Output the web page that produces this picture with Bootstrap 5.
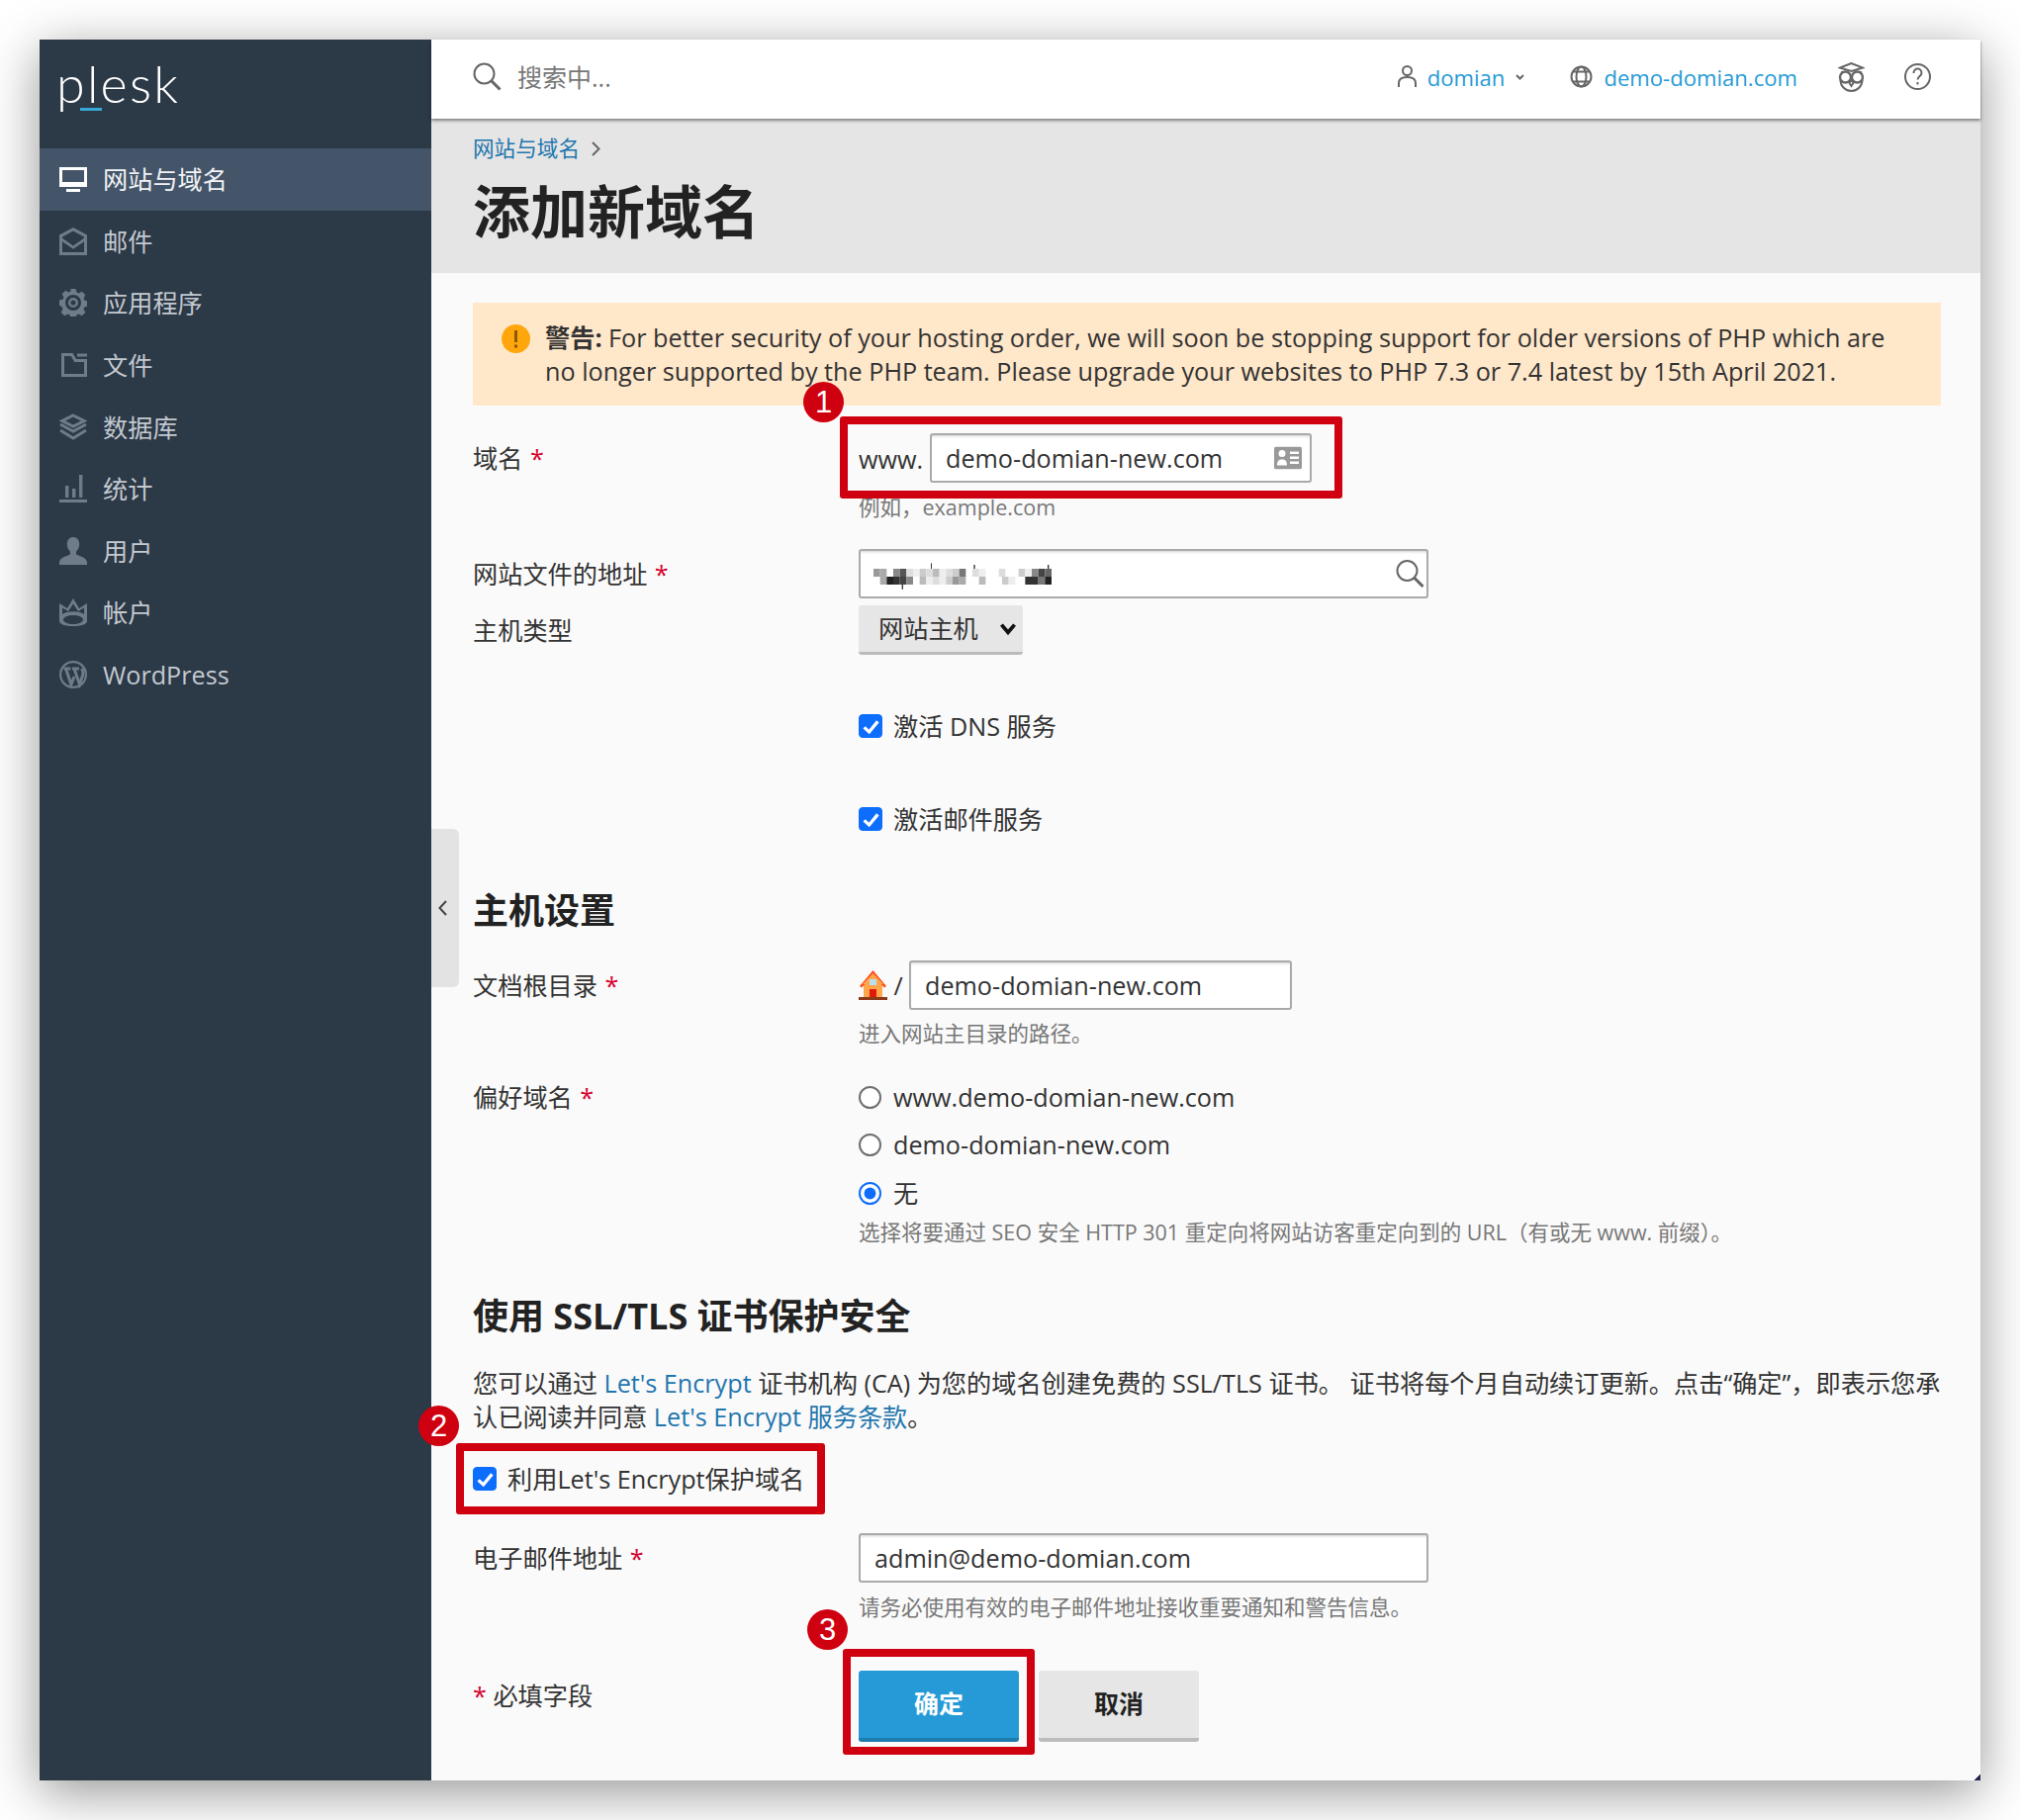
<!DOCTYPE html>
<html lang="zh-CN">
<head>
<meta charset="utf-8">
<title>添加新域名</title>
<link rel="stylesheet" href="https://cdn.jsdelivr.net/npm/bootstrap@5.3.0/dist/css/bootstrap.min.css">
<style>
body{background:#fff;margin:0;font-family:"Open Sans","Noto Sans CJK SC",sans-serif;font-size:25.2px;color:#333;line-height:34px}
.app-window{position:relative;width:1962px;height:1760px;margin:40px;box-shadow:0 12px 50px rgba(0,0,0,.42);background:#fafafa}
.corner-mark{position:absolute;right:0;bottom:0;width:7px;height:7px;background:linear-gradient(135deg,transparent 50%,#23264f 50%)}
.side{width:396px;background:#2c3947;flex:none}
.logo-wrap{height:110px;padding:10px 0 0 17px}
.logo-txt{position:relative;display:inline-block;font-family:Lato,sans-serif;font-weight:300;font-size:52px;line-height:68px;letter-spacing:2.2px;color:#fff}
.logo-txt::after{content:"";position:absolute;left:24px;top:59px;width:22px;height:3px;background:#36a9d6}
.side .nav-link{height:62.6px;display:flex;align-items:center;padding:0 0 0 20px;color:#c3c9d0;font-size:25.2px;gap:16px}
.side .nav-link svg{width:28px;height:28px;flex:none;fill:#6f7b88;stroke:none}
.side .nav-link svg .st{fill:none;stroke:#6f7b88;stroke-width:3}
.side .nav-link.active{background:#445569;color:#f0f2f5}
.side .nav-link.active svg{fill:#fff}
.main-col{position:relative;min-width:0}
.top-strip{height:80px;background:#fff;padding:0 50px 5px 42px;box-shadow:0 2px 3px rgba(0,0,0,.45);position:relative;z-index:2}
.search-hint{color:#777;margin-left:16px;font-size:25px}
.top-link{color:#259ad6;text-decoration:none;font-size:22.1px;font-weight:500}
.ln{fill:none;stroke:#666;stroke-width:2}
.mr-usr{margin-right:11px}.mr-chev{margin-left:11px;margin-right:46px}.mr-globe{margin-right:11px}.ml-owl{margin-left:41px}.ml-help{margin-left:40px}
.page-head{height:156px;background:#e5e5e5;padding:12px 42px 0}
.crumb{font-size:21.6px;line-height:36px;display:flex;align-items:center;gap:12px}
.crumb a,.txt-link{color:#1f76ad;text-decoration:none}
.page-title{font-size:58px;font-weight:700;line-height:76px;margin:8px 0 0;color:#222}
.form-wrap{padding:30px 40px 0 42px}
.warn-box{background:#ffe7c9;border:0;border-radius:0;margin:0;padding:18px 40px 18px 29px;color:#333;gap:15px;line-height:34px}
.warn-ico{flex:none;width:29px;height:29px;margin-top:4px}
.field-lbl{width:390px;flex:none;margin:0}
.lbl-50{line-height:50px}.lbl-30{line-height:30px}
.req{color:#d6002f;margin-left:1px}
.tx-input.form-control{height:50px;border:2px solid #aaa;border-radius:3px;padding:0 14px;font-size:25.2px;color:#333;background:#fff;box-shadow:inset 0 3px 3px -2px rgba(0,0,0,.18)}
.w-576{width:576px}.w-386{width:386px}.w-387{width:387px}
.pos-wrap{position:relative}
.in-ico{position:absolute;top:50%;transform:translateY(-50%);right:10px}
.ico-search{right:4px}
.hint-txt{font-size:21.5px;line-height:30px;color:#777}
.www-txt{width:72px;flex:none;height:50px;line-height:52px}
.mask-svg{position:absolute;left:15px;top:12px}
.host-select.form-select{width:166px;height:50px;padding:0 40px 0 20px;border:0;border-bottom:3px solid #bbb;border-radius:3px;background-color:#e6e6e6;font-size:25.2px;color:#333;background-position:right 4px center;background-size:22px 16px;background-image:url("data:image/svg+xml,%3csvg xmlns='http://www.w3.org/2000/svg' viewBox='0 0 20 14'%3e%3cpath fill='none' stroke='%23111' stroke-width='3.4' d='M4 3l6 7 6-7'/%3e%3c/svg%3e")}
.chk-row{display:flex;align-items:center;gap:12px;margin:0;padding:0;min-height:30px;line-height:30px}
.chk-row .form-check-input{width:23px;height:23px;margin:0;flex:none;float:none}
.chk-row .form-check-input[type=checkbox]{width:24px;height:24px;margin-right:-1px;border-radius:4px;background-size:100% 100%;background-image:url("data:image/svg+xml,%3csvg xmlns='http://www.w3.org/2000/svg' viewBox='0 0 24 24'%3e%3cpath fill='none' stroke='%23fff' stroke-width='3.6' d='M5 13.500l5.500 5L20 7'/%3e%3c/svg%3e")}
.radio-in.form-check-input{border:2px solid #6f6f6f;background-color:#fff}
.radio-in.form-check-input:checked{border:2px solid #0d6efd;background-color:#fff;background-size:100% 100%;background-image:url("data:image/svg+xml,%3csvg xmlns='http://www.w3.org/2000/svg' viewBox='-4 -4 8 8'%3e%3ccircle r='2.500' fill='%230d6efd'/%3e%3c/svg%3e")}
.sec-title{font-weight:700;color:#222;margin:0;line-height:50px;font-size:36px}
.m7{margin-top:7px}.m9{margin-top:9px}.m10{margin-top:10px}.m18{margin-top:18px}.m19{margin-top:19px}.m25{margin-top:25px}.m27{margin-top:27px}.m28{margin-top:28px}.m31{margin-top:31px}.m34{margin-top:34px}.m40{margin-top:40px}.m45{margin-top:45px}.m49{margin-top:49px}.m53{margin-top:53px}.m57{margin-top:57px}.m64{margin-top:64px}
.slash{width:22px;text-align:center;flex:none}
.para-txt{margin:25px 0 0;line-height:34px}
.act-btn.btn{width:162px;height:72px;border:0;border-bottom:4px solid;border-radius:3px;font-size:25px;font-weight:700;padding:0}
.act-ok.btn{background:#259ad6;color:#fff;border-color:#1f7cae}
.act-no.btn{background:#e6e6e6;color:#222;border-color:#bcbcbc}
.act-gap{gap:20px}
.red-frame{position:absolute;border:8px solid #cf000f;border-radius:3px;pointer-events:none;z-index:5}
.rf1{left:809px;top:381px;width:508px;height:83px}
.rf2{left:421px;top:1419px;width:373px;height:72px}
.rf3{left:812px;top:1627px;width:194px;height:107px}
.num-dot{position:absolute;width:41px;height:41px;border-radius:50%;background:#cf000f;color:#fff;font-family:"Liberation Sans",sans-serif;font-size:31px;line-height:41px;text-align:center;z-index:6}
.nd1{left:772px;top:346px}.nd2{left:383px;top:1381px}.nd3{left:776px;top:1587px}
.collapse-tab{position:absolute;left:0;top:798px;width:28px;height:160px;background:#e3e3e3;border-radius:0 6px 6px 0;display:flex;align-items:center;padding-left:7px}
</style>
</head>
<body>
<div class="app-window d-flex">
  <aside class="side d-flex flex-column">
    <div class="logo-wrap"><span class="logo-txt">plesk</span></div>
    <nav class="nav flex-column">
      <a class="nav-link active" href="#"><svg viewBox="0 0 28 28"><path fill-rule="evenodd" d="M0 2h28v20H0zM3 5v12h22V5z"/><rect x="7" y="24" width="14" height="3"/></svg>网站与域名</a>
      <a class="nav-link" href="#"><svg viewBox="0 0 28 28"><path fill-rule="evenodd" d="M14 0l14 7.500V28H0V7.500zM14 3.400L3 9.400v1.400l11 7.600 11-7.600V9.400zM3 14.200V25h22V14.200l-11 7.600z"/></svg>邮件</a>
      <a class="nav-link" href="#"><svg viewBox="0 0 28 28"><path fill-rule="evenodd" d="M11.500 0h5l1 3.600 2 .9 3.300-1.800 3.500 3.500-1.800 3.300.8 2 3.700 1v5l-3.700 1-.8 2 1.800 3.300-3.500 3.500-3.300-1.800-2 .8-1 3.700h-5l-1-3.700-2-.8-3.300 1.800-3.500-3.500 1.800-3.300-.8-2L0 16.500v-5l3.700-1 .8-2L2.700 5.200l3.500-3.500 3.300 1.800 2-.9zM14 6a8 8 0 100 16 8 8 0 000-16zM14 9a5 5 0 110 10 5 5 0 010-10zM14 11.500a2.500 2.500 0 100 5 2.500 2.500 0 000-5z"/></svg>应用程序</a>
      <a class="nav-link" href="#"><svg viewBox="0 0 28 28"><path fill-rule="evenodd" d="M2 2h11.500l3.500 6h11v18H2zM5 5v18h20V11H15.300L11.800 5z"/><rect x="18" y="2.500" width="10" height="3"/></svg>文件</a>
      <a class="nav-link" href="#"><svg viewBox="0 0 28 28"><path class="st" d="M14 2L25 7.500 14 13 3 7.500z" stroke-width="2.600"/><path class="st" d="M1 11l13 7 13-7M1 17l13 8 13-8"/></svg>数据库</a>
      <a class="nav-link" href="#"><svg viewBox="0 0 28 28"><rect y="25" width="28" height="3"/><rect x="6" y="11" width="3.400" height="12"/><rect x="13" y="14" width="3.400" height="9"/><rect x="20" y="0" width="3.400" height="23"/></svg>统计</a>
      <a class="nav-link" href="#"><svg viewBox="0 0 28 28"><path d="M14 0c3.800 0 6.200 3 6.200 7 0 3.500-1.500 6-3.200 7.500v3c3 1.500 11 3 11 8.500v2H0v-2c0-5.500 8-7 11-8.500v-3C9.300 13 7.800 10.500 7.800 7 7.800 3 10.200 0 14 0z"/></svg>用户</a>
      <a class="nav-link" href="#"><svg viewBox="0 0 28 28"><path fill-rule="evenodd" d="M14 0l6 10 8-5v18c0 3-6 5-14 5S0 26 0 23V5l8 5zM14 5.500L9 13 3 9.500v6.500C6 14 10 13.300 14 13.300S22 14 25 16V9.500L19 13zM14 17c-5.500 0-10 2-10 4.500S8.500 26 14 26s10-2 10-4.500S19.500 17 14 17z"/></svg>帐户</a>
      <a class="nav-link" href="#"><svg viewBox="0 0 28 28"><path fill-rule="evenodd" d="M14 0a14 14 0 110 28 14 14 0 010-28zM14 2.200a11.800 11.800 0 100 23.600 11.800 11.800 0 000-23.600z"/><path class="st" d="M4.500 8h7M6.500 8l5.500 16 3-8M13 8h7M15 8l5.500 16 3-9c.8-2.500.5-5-1-7" stroke-width="2"/></svg>WordPress</a>
    </nav>
  </aside>
  <div class="main-col flex-grow-1">
    <header class="top-strip d-flex align-items-center">
      <svg width="29" height="29" viewBox="0 0 29 29" class="ln"><circle cx="11.500" cy="11.500" r="10"/><path d="M18.500 18.500l9 9" stroke-width="3"/></svg>
      <span class="search-hint">搜索中...</span>
      <div class="ms-auto d-flex align-items-center">
        <svg class="ln mr-usr" width="19" height="23" viewBox="0 0 19 23"><circle cx="9.500" cy="5.500" r="4.500"/><path d="M1 22v-4c0-4 3-6 8.500-6s8.500 2 8.500 6v4"/></svg>
        <a class="top-link" href="#">domian</a>
        <svg class="ln mr-chev" width="9" height="6" viewBox="0 0 9 6"><path d="M1 1l3.500 3.500L8 1"/></svg>
        <svg class="ln mr-globe" width="23" height="23" viewBox="0 0 23 23"><circle cx="11.500" cy="11.500" r="10"/><ellipse cx="11.500" cy="11.500" rx="5" ry="10"/><path d="M3 6.500h17M3 16.500h17"/></svg>
        <a class="top-link" href="#">demo-domian.com</a>
        <svg class="ln ml-owl" width="27" height="30" viewBox="0 0 27 30"><path d="M13.500 1L2 5.500l11.500 3.500L25 5.500z"/><circle cx="7.500" cy="15" r="5.500" stroke-width="2.400"/><circle cx="19.500" cy="15" r="5.500" stroke-width="2.400"/><path d="M4 9v3M23 9v3M2.500 18c0 6 5 11 11 11s11-5 11-11M13.500 17l-2 4 2 3 2-3z"/></svg>
        <svg class="ln ml-help" width="27" height="29" viewBox="0 0 27 29"><circle cx="13.500" cy="14.500" r="12.500"/><path d="M9.500 11c0-6 8-6 8 0 0 3-4 3-4 6.500"/><path d="M13.500 20v2.500"/></svg>
      </div>
    </header>
    <div class="page-head">
      <div class="crumb"><a href="#">网站与域名</a><svg class="ln" width="9" height="15" viewBox="0 0 9 15"><path d="M1 1l6.500 6.500L1 14"/></svg></div>
      <h1 class="page-title">添加新域名</h1>
    </div>
    <form class="form-wrap">
      <div class="alert warn-box d-flex" role="alert">
        <svg class="warn-ico" viewBox="0 0 29 29"><circle cx="14.500" cy="14.500" r="14.500" fill="#ffa60d"/><rect x="13" y="6" width="3" height="12" fill="#8a5a00"/><rect x="13" y="20.500" width="3" height="3" fill="#8a5a00"/></svg>
        <div><b>警告:</b> For better security of your hosting order, we will soon be stopping support for older versions of PHP which are no longer supported by the PHP team. Please upgrade your websites to PHP 7.3 or 7.4 latest by 15th April 2021.</div>
      </div>
      <div class="d-flex m28">
        <label class="field-lbl lbl-50">域名 <span class="req">*</span></label>
        <div>
          <div class="d-flex">
            <span class="www-txt">www.</span>
            <div class="pos-wrap w-386">
              <input class="form-control tx-input" type="text" value="demo-domian-new.com">
              <svg class="in-ico" width="28" height="23" viewBox="0 0 28 23"><path fill-rule="evenodd" fill="#999" d="M2 0h24a2 2 0 012 2v19a2 2 0 01-2 2H2a2 2 0 01-2-2V2a2 2 0 012-2z"/><circle cx="8" cy="7" r="3.500" fill="#fff"/><path d="M3 19c0-5 2-6 5-6s5 1 5 6zM16 5h9v2.500h-9zM16 10h9v2.500h-9zM16 15h9v2.500h-9z" fill="#fff"/></svg>
            </div>
          </div>
          <div class="hint-txt m10">例如，example.com</div>
        </div>
      </div>
      <div class="d-flex m27">
        <label class="field-lbl lbl-50">网站文件的地址 <span class="req">*</span></label>
        <div class="pos-wrap w-576">
          <input class="form-control tx-input" type="text" value="" aria-label="网站文件的地址">
          <svg class="mask-svg" width="180" height="32" viewBox="0 0 27 4" preserveAspectRatio="none"><g><rect x="0" y="1" width="1" height="1" fill="#999"/><rect x="1" y="1" width="1" height="1" fill="#aaa"/><rect x="3" y="1" width="1" height="1" fill="#888"/><rect x="4" y="1" width="1" height="1" fill="#555"/><rect x="5" y="1" width="1" height="1" fill="#ddd"/><rect x="6" y="1" width="1" height="1" fill="#eee"/><rect x="7" y="1" width="1" height="1" fill="#ccc"/><rect x="8" y="1" width="1" height="1" fill="#ddd"/><rect x="9" y="1" width="1" height="1" fill="#bbb"/><rect x="10" y="1" width="1" height="1" fill="#eee"/><rect x="11" y="1" width="1" height="1" fill="#ddd"/><rect x="12" y="1" width="1" height="1" fill="#ccc"/><rect x="13" y="1" width="1" height="1" fill="#777"/><rect x="15" y="1" width="1" height="1" fill="#ddd"/><rect x="16" y="1" width="1" height="1" fill="#eee"/><rect x="19" y="1" width="1" height="1" fill="#ddd"/><rect x="22" y="1" width="1" height="1" fill="#ccc"/><rect x="23" y="1" width="1" height="1" fill="#eee"/><rect x="24" y="1" width="1" height="1" fill="#888"/><rect x="25" y="1" width="1" height="1" fill="#444"/><rect x="26" y="1" width="1" height="1" fill="#666"/></g><g><rect x="1" y="2" width="1" height="1" fill="#aaa"/><rect x="2" y="2" width="1" height="1" fill="#222"/><rect x="3" y="2" width="1" height="1" fill="#333"/><rect x="4" y="2" width="1" height="1" fill="#444"/><rect x="5" y="2" width="1" height="1" fill="#888"/><rect x="7" y="2" width="1" height="1" fill="#bbb"/><rect x="8" y="2" width="1" height="1" fill="#eee"/><rect x="9" y="2" width="1" height="1" fill="#ddd"/><rect x="10" y="2" width="1" height="1" fill="#eee"/><rect x="11" y="2" width="1" height="1" fill="#ccc"/><rect x="12" y="2" width="1" height="1" fill="#999"/><rect x="13" y="2" width="1" height="1" fill="#aaa"/><rect x="16" y="2" width="1" height="1" fill="#bbb"/><rect x="19.500" y="2" width="1" height="1" fill="#ccc"/><rect x="20.500" y="2" width="1" height="1" fill="#eee"/><rect x="23" y="2" width="1" height="1" fill="#333"/><rect x="24" y="2" width="1" height="1" fill="#333"/><rect x="25" y="2" width="1" height="1" fill="#777"/><rect x="26" y="2" width="1" height="1" fill="#222"/></g><rect x="8.700" y=".3" width=".15" height=".7" fill="#333"/><rect x="15.200" y=".5" width=".2" height=".5" fill="#333"/><rect x="26.400" y=".5" width=".2" height=".5" fill="#333"/><rect x="4.300" y="3" width=".2" height=".6" fill="#333"/></svg>
          <svg class="in-ico ico-search ln" width="29" height="29" viewBox="0 0 29 29"><circle cx="11.500" cy="11.500" r="10"/><path d="M18.500 18.500l9 9" stroke-width="3"/></svg>
        </div>
      </div>
      <div class="d-flex m7">
        <label class="field-lbl lbl-50">主机类型</label>
        <select class="form-select host-select" aria-label="主机类型"><option>网站主机</option></select>
      </div>
      <div class="d-flex m57">
        <div class="field-lbl"></div>
        <label class="chk-row form-check"><input class="form-check-input" type="checkbox" checked>激活 DNS 服务</label>
      </div>
      <div class="d-flex m64">
        <div class="field-lbl"></div>
        <label class="chk-row form-check"><input class="form-check-input" type="checkbox" checked>激活邮件服务</label>
      </div>
      <h2 class="sec-title m53">主机设置</h2>
      <div class="d-flex m25">
        <label class="field-lbl lbl-50">文档根目录 <span class="req">*</span></label>
        <div>
          <div class="d-flex align-items-center">
            <svg width="29" height="30" viewBox="0 0 29 30"><path d="M5 13h19v15H5z" fill="#ffa64d"/><path d="M14.500 0L1 16l2 1.500L14.500 5 26 17.500l2-1.500z" fill="#ff4a1c"/><path d="M14.500 3L4 14h21z" fill="#ffa64d"/><rect x="11" y="9" width="7" height="6" fill="#b8e0ee"/><rect x="11" y="19" width="7" height="9" fill="#e01b0b"/><rect y="27" width="29" height="3" fill="#8b3a1a"/></svg>
            <span class="slash">/</span>
            <input class="form-control tx-input w-387" type="text" value="demo-domian-new.com">
          </div>
          <div class="hint-txt m9">进入网站主目录的路径。</div>
        </div>
      </div>
      <div class="d-flex m34">
        <label class="field-lbl lbl-30">偏好域名 <span class="req">*</span></label>
        <div>
          <label class="chk-row form-check"><input class="form-check-input radio-in" type="radio" name="pref">www.demo-domian-new.com</label>
          <label class="chk-row form-check m18"><input class="form-check-input radio-in" type="radio" name="pref">demo-domian-new.com</label>
          <label class="chk-row form-check m19"><input class="form-check-input radio-in" type="radio" name="pref" checked>无</label>
          <div class="hint-txt m10">选择将要通过 SEO 安全 HTTP 301 重定向将网站访客重定向到的 URL（有或无 www. 前缀）。</div>
        </div>
      </div>
      <h2 class="sec-title m45">使用 SSL/TLS 证书保护安全</h2>
      <p class="para-txt">您可以通过 <a class="txt-link" href="#">Let's Encrypt</a> 证书机构 (CA) 为您的域名创建免费的 SSL/TLS 证书。 证书将每个月自动续订更新。点击“确定”，即表示您承认已阅读并同意 <a class="txt-link" href="#">Let's Encrypt 服务条款</a>。</p>
      <label class="chk-row form-check m31"><input class="form-check-input" type="checkbox" checked>利用Let's Encrypt保护域名</label>
      <div class="d-flex m40">
        <label class="field-lbl lbl-50">电子邮件地址 <span class="req">*</span></label>
        <div>
          <input class="form-control tx-input w-576" type="text" value="admin@demo-domian.com">
          <div class="hint-txt m10">请务必使用有效的电子邮件地址接收重要通知和警告信息。</div>
        </div>
      </div>
      <div class="d-flex m49">
        <div class="field-lbl lbl-50"><span class="req ms-0">*</span> 必填字段</div>
        <div class="d-flex act-gap">
          <button class="btn act-btn act-ok" type="button">确定</button>
          <button class="btn act-btn act-no" type="button">取消</button>
        </div>
      </div>
    </form>
    <div class="collapse-tab"><svg class="ln" width="9" height="16" viewBox="0 0 9 16"><path d="M8 1L1.500 8 8 15" stroke="#444"/></svg></div>
  </div>
  <div class="red-frame rf1"></div>
  <div class="red-frame rf2"></div>
  <div class="red-frame rf3"></div>
  <div class="num-dot nd1">1</div>
  <div class="num-dot nd2">2</div>
  <div class="num-dot nd3">3</div>
  <div class="corner-mark"></div>
</div>
<script src="https://cdn.jsdelivr.net/npm/bootstrap@5.3.0/dist/js/bootstrap.bundle.min.js"></script>
</body>
</html>
